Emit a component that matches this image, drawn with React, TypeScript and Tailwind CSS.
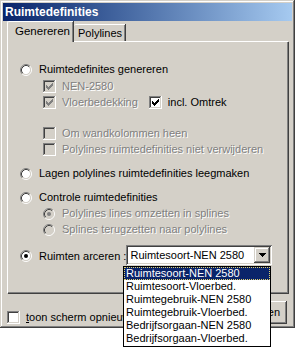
import React from "react";

const DIS = "text-[#808080] [text-shadow:1px_1px_0_#ffffff]";

function CheckBox({ checked, disabled }: { checked?: boolean; disabled?: boolean }) {
  const bg = disabled ? "#d4d0c8" : "#ffffff";
  const ck = disabled ? "#808080" : "#000000";
  const cols: [number, number][] = [
    [3, 5],
    [4, 6],
    [5, 7],
    [6, 6],
    [7, 5],
    [8, 4],
    [9, 3],
  ];
  return (
    <svg width="13" height="13" viewBox="0 0 13 13" className="shrink-0" shapeRendering="crispEdges">
      <rect x="0" y="0" width="13" height="13" fill={bg} />
      <path d="M0.5 12 V0.5 H12" stroke="#808080" fill="none" />
      <path d="M1.5 11 V1.5 H11" stroke="#404040" fill="none" />
      <path d="M0 12.5 H12.5 V0" stroke="#ffffff" fill="none" />
      <path d="M1 11.5 H11.5 V1" stroke="#d4d0c8" fill="none" />
      {checked && cols.map(([x, y]) => <rect key={x} x={x} y={y} width="1" height="3" fill={ck} />)}
    </svg>
  );
}

function Radio({ checked, disabled }: { checked?: boolean; disabled?: boolean }) {
  const bg = disabled ? "#d4d0c8" : "#ffffff";
  const dot = disabled ? "#808080" : "#000000";
  return (
    <svg width="12" height="12" viewBox="0 0 12 12" className="shrink-0">
      <circle cx="6" cy="6" r="4.2" fill={bg} />
      <path d="M2.11 9.89 A5.5 5.5 0 0 1 9.89 2.11" stroke="#808080" fill="none" />
      <path d="M9.89 2.11 A5.5 5.5 0 0 1 2.11 9.89" stroke="#ffffff" fill="none" />
      <path d="M2.82 9.18 A4.5 4.5 0 0 1 9.18 2.82" stroke="#404040" fill="none" />
      <path d="M9.18 2.82 A4.5 4.5 0 0 1 2.82 9.18" stroke="#d4d0c8" fill="none" />
      {checked && <circle cx="6" cy="6" r="2" fill={dot} />}
    </svg>
  );
}

function Row({
  kind,
  checked,
  disabled,
  label,
  className = "",
}: {
  kind: "radio" | "check";
  checked?: boolean;
  disabled?: boolean;
  label: string;
  className?: string;
}) {
  return (
    <div className={`flex items-center h-[13px] ${className}`}>
      {kind === "radio" ? (
        <div className="w-[13px] flex justify-start">
          <Radio checked={checked} disabled={disabled} />
        </div>
      ) : (
        <CheckBox checked={checked} disabled={disabled} />
      )}
      <span className={`ml-[6px] whitespace-nowrap leading-[13px] ${disabled ? DIS : "text-black"}`}>{label}</span>
    </div>
  );
}

export default function App() {
  const items = [
    "Ruimtesoort-NEN 2580",
    "Ruimtesoort-Vloerbed.",
    "Ruimtegebruik-NEN 2580",
    "Ruimtegebruik-Vloerbed.",
    "Bedrijfsorgaan-NEN 2580",
    "Bedrijfsorgaan-Vloerbed.",
  ];
  return (
    <div className="relative w-[295px] h-[347px] bg-white font-['Liberation_Sans',Arial,sans-serif] text-[11px] text-black overflow-hidden">
      {/* window */}
      <div className="w-[295px] h-[328px] bg-[#d4d0c8] p-[3px] flex flex-col shadow-[inset_-1px_-1px_#404040,inset_1px_1px_#d4d0c8,inset_-2px_-2px_#808080,inset_2px_2px_#ffffff]">
        {/* title bar */}
        <div className="h-[18px] shrink-0 bg-gradient-to-r from-[#0a246a] to-[#a6caf0] flex items-center pl-[2px]">
          <span className="text-white font-bold text-[12px] leading-[18px]">Ruimtedefinities</span>
        </div>
        {/* tabs */}
        <div className="flex items-end h-[20px] shrink-0 pl-[4px] relative z-10">
          <div className="w-[66px] h-[21px] -mb-[1px] bg-[#d4d0c8] border-l border-t border-white rounded-tl-[2px] shadow-[inset_-1px_0_#808080,1px_0_#404040] flex items-start pl-[7px] pt-[2px]">
            <span className="text-[11.5px] leading-[14px]">Genereren</span>
          </div>
          <div className="w-[51px] h-[17px] ml-[1px] bg-[#d4d0c8] border-t border-white rounded-tl-[2px] shadow-[inset_-1px_0_#808080,1px_0_#404040] flex items-start pl-[4px] pt-[1px]">
            <span className="leading-[14px]">Polylines</span>
          </div>
        </div>
        {/* panel */}
        <div className="ml-[4px] w-[281px] h-[252px] shrink-0 border-l border-t border-white shadow-[inset_-1px_-1px_#808080,1px_1px_#404040] pl-[12px] flex flex-col">
          <Row kind="radio" label="Ruimtedefinites genereren" className="mt-[21px]" />
          <div className="ml-[23px] flex flex-col">
            <Row kind="check" checked disabled label="NEN-2580" className="mt-[4px]" />
            <div className="flex items-center mt-[3px]">
              <Row kind="check" checked disabled label="Vloerbedekking" />
              <Row kind="check" checked label="incl. Omtrek" className="ml-[11px]" />
            </div>
            <Row kind="check" disabled label="Om wandkolommen heen" className="mt-[18px]" />
            <Row kind="check" disabled label="Polylines ruimtedefinities niet verwijderen" className="mt-[3px]" />
          </div>
          <Row kind="radio" label="Lagen polylines ruimtedefinities leegmaken" className="mt-[11px]" />
          <Row kind="radio" label="Controle ruimtedefinities" className="mt-[11px]" />
          <div className="ml-[23px] flex flex-col">
            <Row kind="radio" checked disabled label="Polylines lines omzetten in splines" className="mt-[3px]" />
            <Row kind="radio" disabled label="Splines terugzetten naar polylines" className="mt-[3px]" />
          </div>
          <div className="flex items-center mt-[9px] h-[20px]">
            <div className="flex items-center pt-[2px]">
              <div className="w-[13px]">
                <Radio checked />
              </div>
              <span className="ml-[6px] whitespace-nowrap">Ruimten arceren :</span>
            </div>
            <div className="ml-auto mr-[16px] w-[149px] h-[20px] bg-white shadow-[inset_1px_1px_#808080,inset_-1px_-1px_#ffffff,inset_2px_2px_#404040,inset_-2px_-2px_#d4d0c8] flex items-center pl-[4px] pr-[2px]">
              <span className="flex-1 whitespace-nowrap leading-[14px]">Ruimtesoort-NEN 2580</span>
              <div className="w-[16px] h-[16px] bg-[#d4d0c8] shadow-[inset_-1px_-1px_#404040,inset_1px_1px_#d4d0c8,inset_-2px_-2px_#808080,inset_2px_2px_#ffffff] flex items-center justify-center">
                <svg width="7" height="4" viewBox="0 0 7 4" shapeRendering="crispEdges">
                  <path d="M0 0 H7 L3.5 4 Z" fill="#000" />
                </svg>
              </div>
            </div>
          </div>
        </div>
        {/* bottom row */}
        <div className="flex items-start ml-[4px] mt-[8px] relative">
          <div className="flex items-center mt-[8px] w-[116px] overflow-hidden">
            <CheckBox />
            <span className="ml-[6px] whitespace-nowrap">
              <span className="underline">t</span>oon scherm opnieuw opbouwen
            </span>
          </div>
          <div className="absolute left-[205px] top-0 w-[75px] h-[23px] bg-[#d4d0c8] shadow-[inset_-1px_-1px_#404040,inset_1px_1px_#ffffff,inset_-2px_-2px_#808080] flex items-center justify-end pr-[7px] overflow-hidden">
            <span className="whitespace-nowrap">Annuleren</span>
          </div>
        </div>
      </div>
      {/* dropdown list */}
      <div className="absolute left-[123px] top-[266px] w-[148px] h-[81px] bg-white border border-black flex flex-col z-20">
        {items.map((it, i) => (
          <div
            key={it}
            className={`h-[13px] leading-[13px] pl-[2px] whitespace-nowrap ${
              i === 0 ? "bg-[#0a246a] text-white outline-1 outline-dotted outline-[#e0d070] -outline-offset-1" : "text-black"
            }`}
          >
            {it}
          </div>
        ))}
      </div>
    </div>
  );
}
